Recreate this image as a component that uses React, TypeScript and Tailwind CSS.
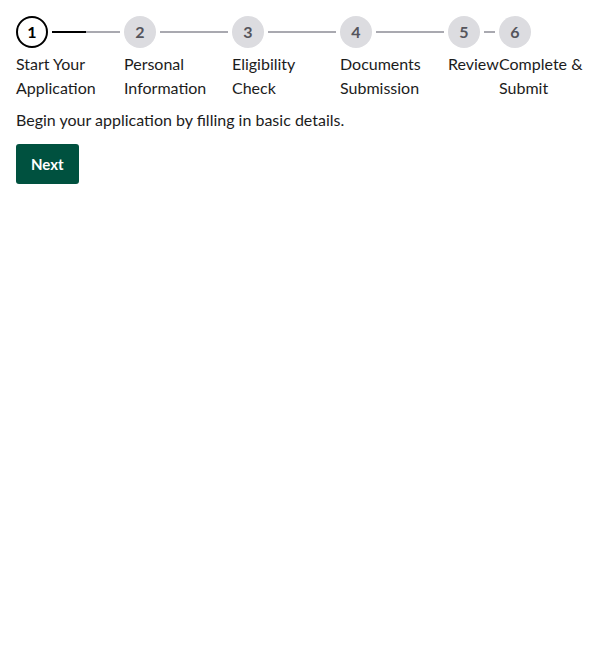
const STEPS = [
  { n: 1, label: ["Start Your", "Application"], w: "w-[108px]" },
  { n: 2, label: ["Personal", "Information"], w: "w-[108px]" },
  { n: 3, label: ["Eligibility", "Check"], w: "w-[108px]" },
  { n: 4, label: ["Documents", "Submission"], w: "w-[108px]" },
  { n: 5, label: ["Review"], w: "w-[51px]" },
  { n: 6, label: ["Complete &", "Submit"], w: "flex-1" },
];

export default function App() {
  return (
    <div className="min-h-screen bg-white p-4 text-[#1c1c1c] [font-family:Lato,'Liberation_Sans',sans-serif]">
      <ol className="flex">
        {STEPS.map((step, i) => {
          const active = i === 0;
          const last = i === STEPS.length - 1;
          return (
            <li key={step.n} className={`flex shrink-0 flex-col ${step.w}`}>
              <div className="flex items-center">
                <div
                  className={
                    active
                      ? "flex h-8 w-8 shrink-0 items-center justify-center rounded-full border-2 border-black bg-white text-base font-bold text-black"
                      : "flex h-8 w-8 shrink-0 items-center justify-center rounded-full bg-[#dcdce0] text-base font-bold text-[#55555c]"
                  }
                >
                  {step.n}
                </div>
                {!last && (
                  <div className="mx-1 flex h-0.5 flex-1 bg-[#a9a9b0]">
                    {active && <div className="h-full w-1/2 bg-black" />}
                  </div>
                )}
              </div>
              <div className="mt-1 text-base leading-6 whitespace-nowrap">
                {step.label.map((line) => (
                  <div key={line}>{line}</div>
                ))}
              </div>
            </li>
          );
        })}
      </ol>
      <p className="mt-2 text-base leading-6">Begin your application by filling in basic details.</p>
      <button className="mt-3 h-10 rounded-[3px] bg-[#00513f] px-[15px] text-[15px] font-bold text-white">
        Next
      </button>
    </div>
  );
}
